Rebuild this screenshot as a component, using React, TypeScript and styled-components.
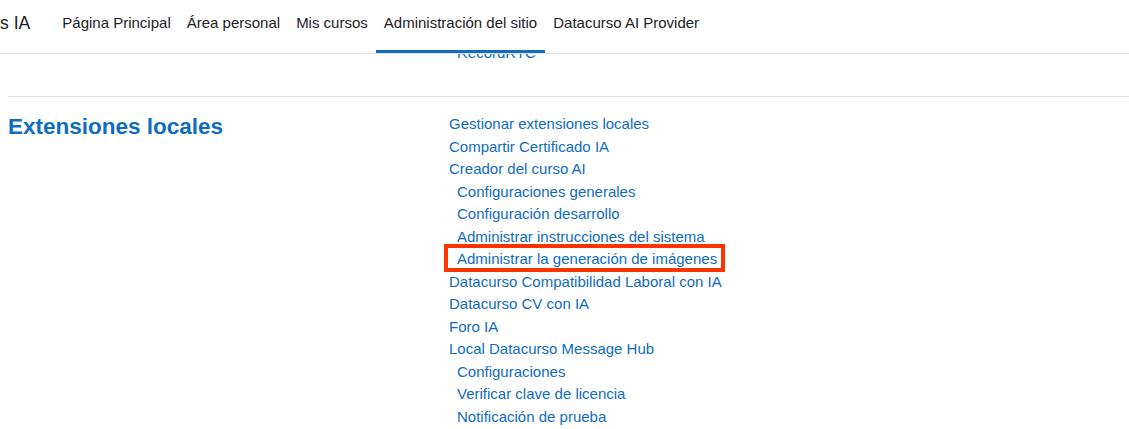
import React from 'react';
import styled, { createGlobalStyle } from 'styled-components';

const GlobalStyle = createGlobalStyle`
  html, body {
    margin: 0;
    padding: 0;
    background: #fff;
  }
  body {
    font-family: "Liberation Sans", Arial, sans-serif;
    font-size: 15px;
    line-height: 1.5;
    color: #1d2125;
    overflow: hidden;
  }
`;

interface LinkItem {
  label: string;
  sub?: boolean;
  highlight?: boolean;
}

const previous: LinkItem[] = [{ label: 'RecordRTC', sub: true }];

const localPlugins: LinkItem[] = [
  { label: 'Gestionar extensiones locales' },
  { label: 'Compartir Certificado IA' },
  { label: 'Creador del curso AI' },
  { label: 'Configuraciones generales', sub: true },
  { label: 'Configuración desarrollo', sub: true },
  { label: 'Administrar instrucciones del sistema', sub: true },
  { label: 'Administrar la generación de imágenes', sub: true, highlight: true },
  { label: 'Datacurso Compatibilidad Laboral con IA' },
  { label: 'Datacurso CV con IA' },
  { label: 'Foro IA' },
  { label: 'Local Datacurso Message Hub' },
  { label: 'Configuraciones', sub: true },
  { label: 'Verificar clave de licencia', sub: true },
  { label: 'Notificación de prueba', sub: true },
];

const navItems = [
  { label: 'Página Principal' },
  { label: 'Área personal' },
  { label: 'Mis cursos' },
  { label: 'Administración del sitio', active: true },
  { label: 'Datacurso AI Provider' },
];

const App: React.FC = () => {
  return (
    <>
      <GlobalStyle />
      <Navbar>
        <Brand>s IA</Brand>
        <NavList>
          {navItems.map((item) => (
            <NavItem key={item.label} $active={item.active}>
              {item.label}
            </NavItem>
          ))}
        </NavList>
      </Navbar>
      <Main>
        <Category>
          <div />
          <LinkList>
            {previous.map((l) => (
              <LinkRow key={l.label} $sub={l.sub}>
                <a href="#">{l.label}</a>
              </LinkRow>
            ))}
          </LinkList>
        </Category>
        <Divider />
        <Category>
          <Heading>Extensiones locales</Heading>
          <LinkList>
            {localPlugins.map((l) => (
              <LinkRow key={l.label} $sub={l.sub} $highlight={l.highlight}>
                <a href="#">{l.label}</a>
              </LinkRow>
            ))}
          </LinkList>
        </Category>
      </Main>
    </>
  );
};

const Navbar = styled.nav`
  position: fixed;
  top: 0;
  left: 0;
  right: 0;
  z-index: 10;
  height: 53px;
  background: #fff;
  border-bottom: 1px solid #dee2e6;
  display: flex;
  align-items: stretch;
`;

const Brand = styled.div`
  font-size: 17.6px;
  line-height: 22.5px;
  padding-top: 11.5px;
  color: #1d2125;
  margin-right: 24px;
  white-space: nowrap;
`;

const NavList = styled.ul`
  list-style: none;
  margin: 0;
  padding: 0;
  display: flex;
`;

const NavItem = styled.li<{ $active?: boolean }>`
  padding: 11.5px 8px 0;
  line-height: 22.5px;
  font-size: 15px;
  color: #1d2125;
  white-space: nowrap;
  border-bottom: 3px solid ${(p) => (p.$active ? '#0f6cbf' : 'transparent')};
`;

const Main = styled.main`
  padding: 42px 0 0 8px;
`;

const Category = styled.div`
  display: grid;
  grid-template-columns: 441px 1fr;
  align-items: start;
`;

const Heading = styled.h3`
  margin: 0;
  font-size: 22.5px;
  line-height: 1.2;
  font-weight: 700;
  color: #0f6cbf;
`;

const LinkList = styled.ul`
  list-style: none;
  margin: 0 0 16px;
  padding: 0;
`;

const LinkRow = styled.li<{ $sub?: boolean; $highlight?: boolean }>`
  position: relative;
  width: fit-content;
  padding-left: ${(p) => (p.$sub ? '8px' : '0')};
  line-height: 22.5px;

  a {
    color: #0f6cbf;
    text-decoration: none;
  }

  ${(p) =>
    p.$highlight &&
    `
    &::after {
      content: '';
      position: absolute;
      top: -4px;
      left: -5px;
      right: -8px;
      bottom: -1px;
      border: 4px solid #ff3300;
      pointer-events: none;
    }
  `}
`;

const Divider = styled.hr`
  margin: 15.5px 0 16px;
  border: 0;
  border-top: 1px solid #dee2e6;
`;

export default App;
